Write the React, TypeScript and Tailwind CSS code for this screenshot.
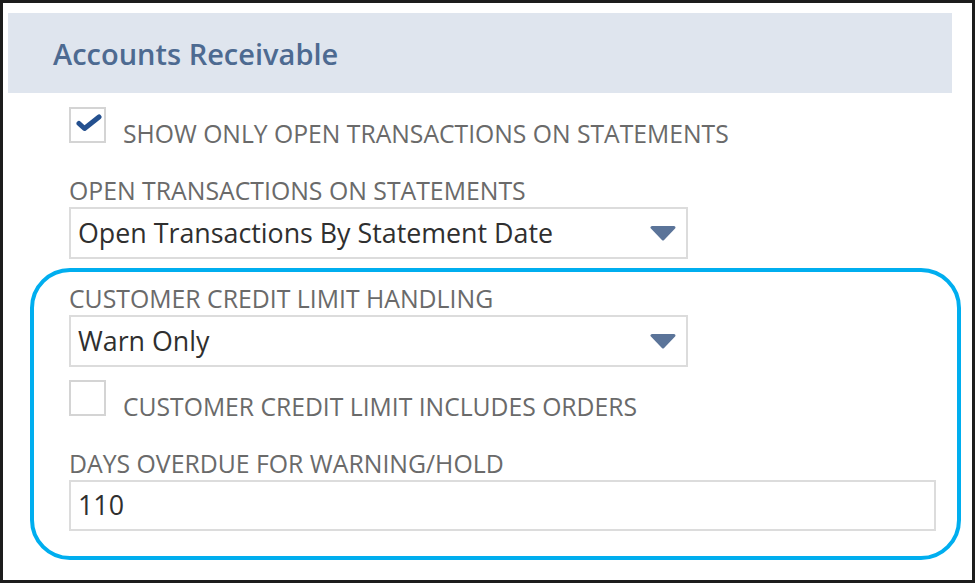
import React from 'react';

const font = { fontFamily: '"Open Sans", "Liberation Sans", sans-serif' };

const Checkbox = ({ checked }: { checked?: boolean }) => (
  <div className="w-[37px] h-[36px] border-2 border-[#d4d4d4] bg-white shrink-0 relative">
    {checked && (
      <svg className="absolute left-[5px] top-[5px]" width="26" height="18" viewBox="0 0 26 18">
        <path d="M3 9.5 L8.5 14.5 L23 3" fill="none" stroke="#24508f" strokeWidth="5" strokeLinecap="round" strokeLinejoin="round" />
      </svg>
    )}
  </div>
);

const CheckRow = ({ checked, label }: { checked?: boolean; label: string }) => (
  <div className="flex items-start h-[43px]">
    <Checkbox checked={checked} />
    <span className="ml-[17px] mt-[10px] text-[24.7px] leading-[33px] text-[#6a6a6a] whitespace-nowrap">{label}</span>
  </div>
);

const FieldLabel = ({ children }: { children: React.ReactNode }) => (
  <div className="text-[24.8px] leading-[33px] text-[#6a6a6a] whitespace-nowrap">{children}</div>
);

const Select = ({ value }: { value: string }) => (
  <div className="w-[619px] h-[52px] border-2 border-[#dcdcdc] bg-white flex items-center pl-[7px] pr-[10px]">
    <span className="flex-1 text-[26.8px] text-[#2f2f2f] whitespace-nowrap">{value}</span>
    <svg width="26" height="16" viewBox="0 0 26 16">
      <path d="M2 2.5 L24 2.5 L13 14 Z" fill="#5b7499" stroke="#5b7499" strokeWidth="3" strokeLinejoin="round" />
    </svg>
  </div>
);

export default function App() {
  return (
    <div className="w-[975px] h-[583px] bg-white border-[3px] border-[#1c1c1c] overflow-hidden" style={font}>
      <div className="ml-[5px] mt-[10px] w-[944px] h-[80px] bg-[#dfe5ee] flex items-center pl-[45px]">
        <h1 className="text-[29px] font-semibold text-[#4d6a91] leading-none">Accounts Receivable</h1>
      </div>

      <div className="ml-[27px] mt-[14px]">
        <div className="pl-[39px]">
          <CheckRow checked label="SHOW ONLY OPEN TRANSACTIONS ON STATEMENTS" />
          <div className="mt-[24px]">
            <FieldLabel>OPEN TRANSACTIONS ON STATEMENTS</FieldLabel>
            <Select value="Open Transactions By Statement Date" />
          </div>
        </div>

        <div className="mt-[9px] w-[931px] h-[292px] border-4 border-[#00aeef] rounded-[40px] pl-[35px] pr-[21px] pt-[10px]">
          <FieldLabel>CUSTOMER CREDIT LIMIT HANDLING</FieldLabel>
          <Select value="Warn Only" />
          <div className="mt-[13px]">
            <CheckRow label="CUSTOMER CREDIT LIMIT INCLUDES ORDERS" />
          </div>
          <div className="mt-[24px]">
            <FieldLabel>DAYS OVERDUE FOR WARNING/HOLD</FieldLabel>
            <div className="h-[51px] border-2 border-[#dcdcdc] bg-white flex items-center pl-[7px]">
              <span className="text-[26.8px] text-[#2f2f2f]">110</span>
            </div>
          </div>
        </div>
      </div>
    </div>
  );
}
